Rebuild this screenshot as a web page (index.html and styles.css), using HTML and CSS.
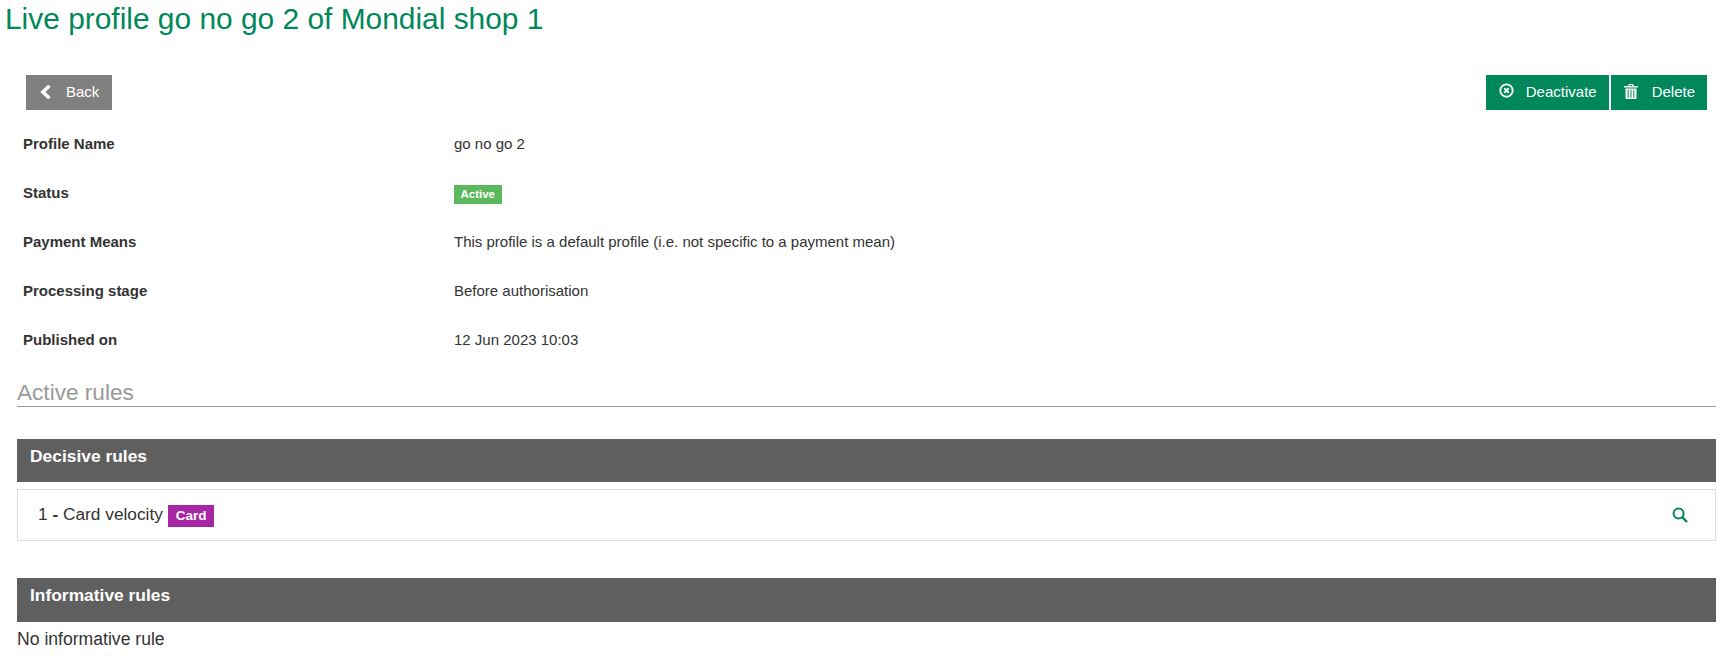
FILE: index.html
```html
<!DOCTYPE html>
<html lang="en">
<head>
  <meta charset="UTF-8">
  <title>Live profile go no go 2 of Mondial shop 1</title>
  <link rel="stylesheet" href="styles.css">
</head>
<body>
  <h1 class="page-title">Live profile go no go 2 of Mondial shop 1</h1>

  <div class="actions">
    <a href="#" class="btn btn-back">
      <svg class="icon" viewBox="0 0 14 14"><path d="M10.5 .8 L3.9 7 L10.5 13.2" fill="none" stroke="#fff" stroke-width="3.6"/></svg>
      Back
    </a>
    <div class="actions-right">
      <a href="#" class="btn btn-green">
        <svg class="icon icon-circle" viewBox="0 0 16 16"><circle cx="8" cy="8" r="6.6" fill="none" stroke="#fff" stroke-width="2"/><path d="M5.6 5.6 L10.4 10.4 M10.4 5.6 L5.6 10.4" stroke="#fff" stroke-width="2"/></svg>
        Deactivate
      </a>
      <a href="#" class="btn btn-green">
        <svg class="icon icon-trash" viewBox="0 0 14 16"><path d="M0 3 H14 V4.4 H0 Z M4.6 3 V1 H9.4 V3 H8.2 V2 H5.8 V3 Z M1.5 5.4 H12.5 V16 H1.5 Z" fill="#fff"/><path d="M4.2 6.6 V14.8 M7 6.6 V14.8 M9.8 6.6 V14.8" stroke="#00875a" stroke-width="1"/></svg>
        Delete
      </a>
    </div>
  </div>

  <div class="details">
    <div class="label">Profile Name</div>
    <div class="value">go no go 2</div>
    <div class="label">Status</div>
    <div class="value"><span class="badge-active">Active</span></div>
    <div class="label">Payment Means</div>
    <div class="value">This profile is a default profile (i.e. not specific to a payment mean)</div>
    <div class="label">Processing stage</div>
    <div class="value">Before authorisation</div>
    <div class="label">Published on</div>
    <div class="value">12 Jun 2023 10:03</div>
  </div>

  <div class="content">
    <h2 class="section-title">Active rules</h2>

    <h3 class="panel-title panel-decisive">Decisive rules</h3>
    <div class="rule">
      <div>1 <b>-</b> Card velocity <span class="badge-card">Card</span></div>
      <a href="#" class="rule-search">
        <svg class="icon" viewBox="0 0 16 16"><circle cx="6.6" cy="6.6" r="5" fill="none" stroke="#00875a" stroke-width="2"/><path d="M10.2 10.2 L15 15" stroke="#00875a" stroke-width="2.4"/></svg>
      </a>
    </div>

    <h3 class="panel-title panel-informative">Informative rules</h3>
    <p class="empty">No informative rule</p>
  </div>
</body>
</html>
```

FILE: styles.css
```css
body {
  margin: 0;
  font-family: "Liberation Sans", Arial, sans-serif;
  color: #333;
  background: #fff;
  overflow: hidden;
}

.page-title {
  margin: 0;
  padding: 2px 0 0 5px;
  height: 72px;
  box-sizing: border-box;
  font-size: 29.9px;
  line-height: 33px;
  font-weight: normal;
  color: #00875a;
}

/* buttons */
.actions {
  display: flex;
  justify-content: space-between;
  margin: 3px 24px 0 26px;
}

.actions-right {
  display: flex;
  gap: 2px;
}

.btn {
  display: flex;
  align-items: center;
  box-sizing: border-box;
  height: 35px;
  padding: 0 12px 2px 13px;
  font-size: 15px;
  color: #fff;
  text-decoration: none;
}

.btn .icon {
  width: 14px;
  height: 14px;
  margin-right: 14px;
}

.btn .icon-circle {
  width: 15px;
  height: 15px;
  margin-right: 12px;
  margin-top: -2px;
}

.btn .icon-trash {
  height: 16px;
  margin-top: -2px;
}

.btn-back {
  padding-right: 13px;
  background: #808080;
}

.btn-back .icon {
  margin-right: 13px;
}

.btn-green {
  background: #00875a;
}

/* profile details */
.details {
  display: grid;
  grid-template-columns: 430px 1fr;
  grid-auto-rows: 49px;
  margin: 9px 0 0 23px;
  font-size: 15px;
  align-items: center;
}

.label {
  font-weight: bold;
  color: #333;
}

.value {
  margin-left: 1px;
}

.badge-active {
  display: inline-block;
  margin-top: 4px;
  padding: 0 6.5px;
  height: 19px;
  line-height: 19px;
  font-size: 11.5px;
  font-weight: bold;
  color: #fff;
  background: #5cb85c;
}

.content {
  margin: 0 15px 0 17px;
}

.section-title {
  margin: 0;
  padding-top: 12px;
  height: 30px;
  line-height: 33px;
  font-size: 22.6px;
  font-weight: normal;
  color: #999;
  border-bottom: 1px solid #999;
}

.panel-title {
  margin: 0;
  padding-left: 13px;
  font-size: 17.4px;
  font-weight: bold;
  color: #fff;
  background: #5f5f5f;
}

.panel-decisive {
  margin-top: 32px;
  height: 43px;
  line-height: 35px;
}

.panel-informative {
  margin-top: 37px;
  height: 44px;
  line-height: 35px;
}

.rule {
  display: flex;
  justify-content: space-between;
  align-items: center;
  height: 52px;
  box-sizing: border-box;
  margin-top: 7px;
  padding: 0 27px 0 20px;
  border: 1px solid #ddd;
  font-size: 17.3px;
}

.badge-card {
  display: inline-block;
  height: 22px;
  line-height: 22px;
  padding: 0 8px;
  font-size: 13.5px;
  font-weight: bold;
  color: #fff;
  background: #a626a4;
}

.rule-search .icon {
  display: block;
  width: 16px;
  height: 16px;
}

.empty {
  margin: 7px 0 0;
  font-size: 17.6px;
}
```
